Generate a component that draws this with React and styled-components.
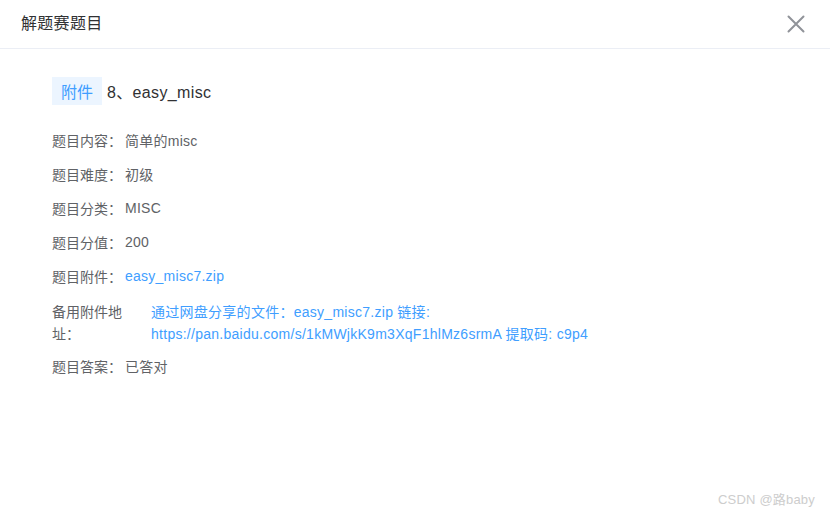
import React from "react";
import styled, { createGlobalStyle } from "styled-components";

const GlobalStyle = createGlobalStyle`
  html, body {
    margin: 0;
    padding: 0;
    background: #fff;
  }
  body {
    font-family: "Liberation Sans", Arial, "Noto Sans CJK SC", sans-serif;
  }
`;

const rows = [
  { label: "题目内容：", value: "简单的misc" },
  { label: "题目难度：", value: "初级" },
  { label: "题目分类：", value: "MISC" },
  { label: "题目分值：", value: "200" },
  { label: "题目附件：", value: "easy_misc7.zip", link: true },
];

const CloseIcon = () => (
  <svg width="18" height="18" viewBox="0 0 18 18">
    <path d="M1.5 1.5 L16.5 16.5 M16.5 1.5 L1.5 16.5" stroke="#909399" strokeWidth="2" strokeLinecap="round" />
  </svg>
);

const App = () => {
  return (
    <Dialog>
      <GlobalStyle />
      <Header>
        <Title>解题赛题目</Title>
        <CloseButton>
          <CloseIcon />
        </CloseButton>
      </Header>
      <Body>
        <Heading>
          <Tag>附件</Tag>
          <HeadingText>8、easy_misc</HeadingText>
        </Heading>
        {rows.map((row) => (
          <Row key={row.label}>
            <Label>{row.label}</Label>
            <Value link={row.link}>{row.value}</Value>
          </Row>
        ))}
        <BackupRow>
          <BackupLabel>备用附件地址：</BackupLabel>
          <BackupValue>
            通过网盘分享的文件：easy_misc7.zip 链接:
            <br />
            https://pan.baidu.com/s/1kMWjkK9m3XqF1hlMz6srmA 提取码: c9p4
          </BackupValue>
        </BackupRow>
        <Row>
          <Label>题目答案：</Label>
          <Value>已答对</Value>
        </Row>
      </Body>
      <Watermark>CSDN @路baby</Watermark>
    </Dialog>
  );
};

export default App;

const Dialog = styled.div`
  position: relative;
  width: 830px;
  height: 516px;
  background: #fff;
  overflow: hidden;
`;

const Header = styled.div`
  display: flex;
  align-items: center;
  justify-content: space-between;
  height: 48px;
  padding: 0 25px 0 21px;
  border-bottom: 1px solid #ebeef5;
`;

const Title = styled.div`
  font-size: 16px;
  color: #303133;
  line-height: 24px;
  letter-spacing: 0.3px;
`;

const CloseButton = styled.div`
  display: flex;
  align-items: center;
  cursor: pointer;
`;

const Body = styled.div`
  display: flex;
  flex-direction: column;
  padding: 28px 52px 0;
`;

const Heading = styled.div`
  display: flex;
  align-items: center;
  gap: 5px;
  margin-bottom: 18px;
`;

const Tag = styled.span`
  display: inline-flex;
  align-items: center;
  height: 28px;
  padding: 0 9px;
  background: #ecf5ff;
  color: #409eff;
  font-size: 16px;
`;

const HeadingText = styled.span`
  font-size: 16px;
  color: #303133;
  letter-spacing: 0.35px;
`;

const Row = styled.div`
  display: flex;
  align-items: center;
  height: 34px;
  font-size: 14px;
`;

const Label = styled.span`
  color: #606266;
  width: 73px;
  flex-shrink: 0;
`;

const Value = styled.span`
  color: ${({ link }) => (link ? "#409eff" : "#606266")};
  letter-spacing: 0.25px;
`;

const BackupRow = styled.div`
  display: flex;
  padding: 8px 0 4px;
  font-size: 14px;
  line-height: 22px;
`;

const BackupLabel = styled.div`
  width: 76px;
  margin-right: 23px;
  color: #606266;
  flex-shrink: 0;
`;

const BackupValue = styled.div`
  color: #409eff;
  letter-spacing: 0.27px;
`;

const Watermark = styled.div`
  position: absolute;
  right: 15px;
  bottom: 8px;
  font-size: 13px;
  color: #cdcdcd;
  letter-spacing: 0.2px;
`;
